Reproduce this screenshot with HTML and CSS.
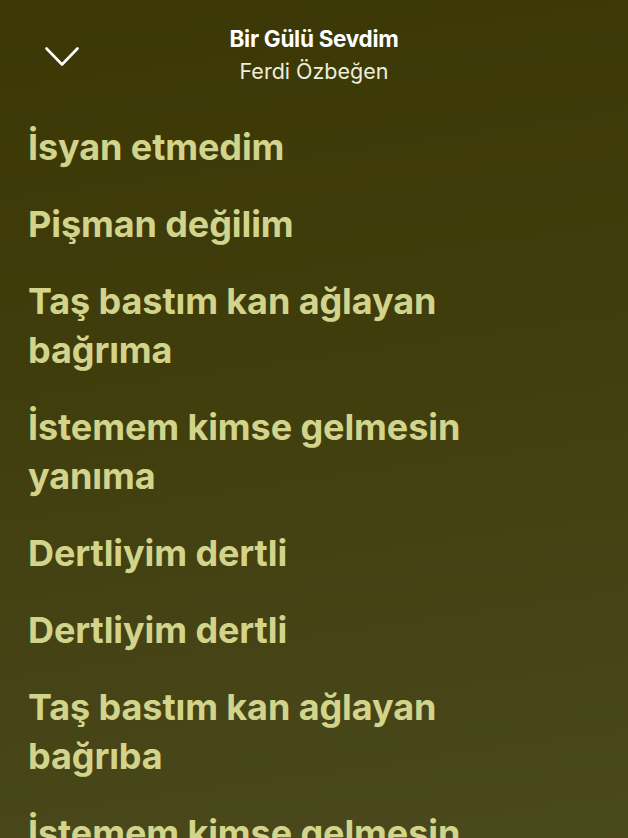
FILE: index.html
```html
<!DOCTYPE html>
<html lang="tr">
<head>
<meta charset="utf-8">
<link rel="stylesheet" href="styles.css">
</head>
<body>
<div class="screen">
  <header class="top">
    <button class="close" aria-label="Kapat">
      <svg width="36" height="24" viewBox="0 0 36 24"><path d="M2.5 3.5 L18 19.5 L33.5 3.5" fill="none" stroke="#fff" stroke-width="2.6" stroke-linecap="round" stroke-linejoin="round"/></svg>
    </button>
    <div class="meta">
      <div class="title">Bir Gülü Sevdim</div>
      <div class="artist">Ferdi Özbeğen</div>
    </div>
    <div class="spacer"></div>
  </header>
  <main class="lyrics">
    <p class="line">İsyan etmedim</p>
    <p class="line">Pişman değilim</p>
    <p class="line">Taş bastım kan ağlayan bağrıma</p>
    <p class="line">İstemem kimse gelmesin yanıma</p>
    <p class="line">Dertliyim dertli</p>
    <p class="line">Dertliyim dertli</p>
    <p class="line">Taş bastım kan ağlayan bağrıba</p>
    <p class="line">İstemem kimse gelmesin yanıma</p>
  </main>
</div>
</body>
</html>
```
FILE: styles.css
```css
html, body {
  margin: 0;
  padding: 0;
  height: 100%;
  overflow: hidden;
}
body {
  background: linear-gradient(172deg, #3b3806 0%, #403d0c 40%, #4a491d 100%);
  font-family: Inter, "Noto Sans", sans-serif;
}
.screen {
  width: 628px;
  height: 838px;
  overflow: hidden;
}
.top {
  display: grid;
  grid-template-columns: 100px 1fr 100px;
  align-items: center;
  padding: 19px 0 0 0;
  height: 72px;
}
.close {
  background: none;
  border: 0;
  padding: 4px 0 0 44px;
  margin: 0;
  display: flex;
  align-items: center;
  height: 30px;
}
.meta {
  text-align: center;
}
.title {
  color: #ffffff;
  font-weight: 700;
  font-size: 22.5px;
  line-height: 32px;
  letter-spacing: -0.3px;
}
.artist {
  color: #eeeed8;
  font-weight: 400;
  font-size: 21.5px;
  line-height: 32px;
  letter-spacing: 0;
}
.lyrics {
  padding: 32px 28px 0 28px;
  display: flex;
  flex-direction: column;
  gap: 28px;
}
.line {
  margin: 0;
  max-width: 490px;
  color: #d2d48b;
  font-weight: 700;
  font-size: 36px;
  line-height: 49px;
  letter-spacing: -0.1px;
}
```
